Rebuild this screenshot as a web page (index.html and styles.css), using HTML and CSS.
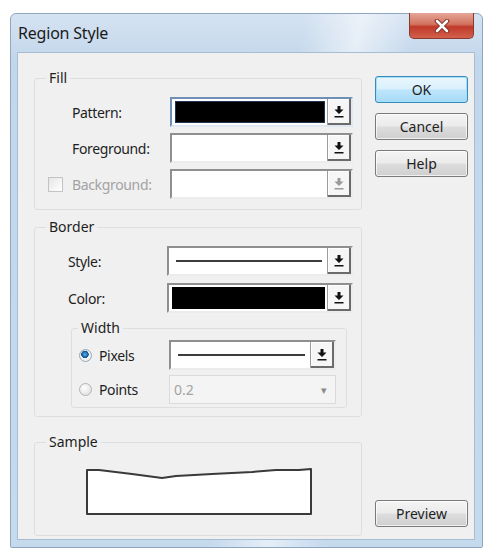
FILE: index.html
```html
<!DOCTYPE html>
<html lang="en">

<head>
  <meta charset="UTF-8">
  <meta name="viewport" content="width=device-width, initial-scale=1.0">
  <title>Region Style</title>
  <link rel="stylesheet" href="styles.css">
</head>

<body>
  <div class="window">
    <div class="titlebar">
      <span class="title">Region Style</span>
      <div class="close-btn">
        <svg width="16" height="14" viewBox="0 0 16 14">
          <path d="M3 2 L13 12 M13 2 L3 12" stroke="#7a2a20" stroke-width="4.5" stroke-linecap="round" />
          <path d="M3 2 L13 12 M13 2 L3 12" stroke="#ffffff" stroke-width="2.6" stroke-linecap="round" />
        </svg>
      </div>
    </div>

    <div class="client">
      <div class="groups">
        <fieldset class="group fill-group">
          <legend>Fill</legend>
          <div class="row fill-row">
            <span></span>
            <span class="lbl">Pattern:</span>
            <div class="combo focused">
              <div class="field"><div class="swatch"></div></div>
              <div class="drop"><svg class="drop-icon" width="10" height="12" viewBox="0 0 10 12"><path d="M3.5 0 H6.5 V3.5 H9.5 L5 8 L0.5 3.5 H3.5 Z M0.5 10 H9.5 V11.5 H0.5 Z" fill="#111" /></svg></div>
            </div>
          </div>
          <div class="row fill-row">
            <span></span>
            <span class="lbl">Foreground:</span>
            <div class="combo">
              <div class="field"></div>
              <div class="drop"><svg class="drop-icon" width="10" height="12" viewBox="0 0 10 12"><path d="M3.5 0 H6.5 V3.5 H9.5 L5 8 L0.5 3.5 H3.5 Z M0.5 10 H9.5 V11.5 H0.5 Z" fill="#111" /></svg></div>
            </div>
          </div>
          <div class="row fill-row">
            <span class="checkbox"></span>
            <span class="lbl disabled">Background:</span>
            <div class="combo">
              <div class="field"></div>
              <div class="drop"><svg class="drop-icon" width="10" height="12" viewBox="0 0 10 12"><path d="M3.5 0 H6.5 V3.5 H9.5 L5 8 L0.5 3.5 H3.5 Z M0.5 10 H9.5 V11.5 H0.5 Z" fill="#9a9a9a" /></svg></div>
            </div>
          </div>
        </fieldset>

        <fieldset class="group border-group">
          <legend>Border</legend>
          <div class="row border-row">
            <span class="lbl">Style:</span>
            <div class="combo">
              <div class="field"><div class="line"></div></div>
              <div class="drop"><svg class="drop-icon" width="10" height="12" viewBox="0 0 10 12"><path d="M3.5 0 H6.5 V3.5 H9.5 L5 8 L0.5 3.5 H3.5 Z M0.5 10 H9.5 V11.5 H0.5 Z" fill="#111" /></svg></div>
            </div>
          </div>
          <div class="row border-row">
            <span class="lbl">Color:</span>
            <div class="combo">
              <div class="field"><div class="swatch"></div></div>
              <div class="drop"><svg class="drop-icon" width="10" height="12" viewBox="0 0 10 12"><path d="M3.5 0 H6.5 V3.5 H9.5 L5 8 L0.5 3.5 H3.5 Z M0.5 10 H9.5 V11.5 H0.5 Z" fill="#111" /></svg></div>
            </div>
          </div>

          <fieldset class="group width-group">
            <legend>Width</legend>
            <div class="row width-row">
              <span class="radio checked"></span>
              <span class="lbl">Pixels</span>
              <div class="combo">
                <div class="field"><div class="line"></div></div>
                <div class="drop"><svg class="drop-icon" width="10" height="12" viewBox="0 0 10 12"><path d="M3.5 0 H6.5 V3.5 H9.5 L5 8 L0.5 3.5 H3.5 Z M0.5 10 H9.5 V11.5 H0.5 Z" fill="#111" /></svg></div>
              </div>
            </div>
            <div class="row width-row">
              <span class="radio"></span>
              <span class="lbl">Points</span>
              <div class="combo flat">
                <span class="value">0.2</span>
                <span class="arrow">&#9662;</span>
              </div>
            </div>
          </fieldset>
        </fieldset>

        <fieldset class="group sample-group">
          <legend>Sample</legend>
          <svg class="sample" width="230" height="50" viewBox="0 0 230 50">
            <path d="M2 3 L14 3 L47 7 L77 11 L91 9 L127 7 L167 5 L191 3 L214 3 L226 2 L226 47 L2 47 Z"
              fill="#ffffff" stroke="#3a3a3a" stroke-width="2" stroke-linejoin="round" />
          </svg>
        </fieldset>
      </div>

      <div class="side">
        <button class="dlg-button default">OK</button>
        <button class="dlg-button">Cancel</button>
        <button class="dlg-button">Help</button>
        <button class="dlg-button preview">Preview</button>
      </div>
    </div>
  </div>
</body>

</html>
```

FILE: styles.css
```css
body {
  margin: 0;
  padding: 13px 0 0 10px;
  background-color: #ffffff;
  font-family: 'Noto Sans', 'Open Sans', sans-serif;
  font-size: 14px;
  color: #1e1e1e;
}

.window {
  box-sizing: border-box;
  width: 473px;
  height: 535px;
  border: 1px solid #8ea6bf;
  border-radius: 6px 6px 2px 2px;
  padding: 0 7px 7px 6px;
  background:
    linear-gradient(100deg, rgba(255, 255, 255, 0) 52%, rgba(255, 255, 255, 0.55) 62%, rgba(255, 255, 255, 0) 72%),
    linear-gradient(to bottom, #d5e3f1 0, #c3d7ec 45px, #c6daee 100%);
}

.titlebar {
  display: flex;
  justify-content: space-between;
  align-items: center;
  height: 38px;
}

.title {
  padding-left: 1px;
  font-size: 16px;
  color: #1a1a1a;
  padding-bottom: 1px;
  letter-spacing: -0.2px;
}

.close-btn {
  align-self: flex-start;
  margin-top: -1px;
  margin-right: 1px;
  width: 65px;
  height: 26px;
  box-sizing: border-box;
  display: flex;
  align-items: center;
  justify-content: center;
  border: 1px solid #8b3a30;
  border-top: none;
  border-radius: 0 0 5px 5px;
  background: linear-gradient(to bottom, #e6a597 0, #d2735f 45%, #c0392a 55%, #d3604c 100%);
}

.client {
  box-sizing: border-box;
  display: flex;
  justify-content: space-between;
  height: 488px;
  padding: 0 6px 0 16px;
  border: 1px solid #a8bdd2;
  background-color: #f0f0f0;
}

.groups {
  width: 328px;
}

/* group boxes */

.group {
  margin: 0;
  padding: 0;
  border: 1px solid #dcdfe2;
  border-radius: 3px;
  min-width: 0;
}

.group legend {
  margin-left: 11px;
  padding: 0 3px;
  line-height: 16px;
}

.fill-group {
  margin-top: 17px;
  padding: 11px 0 10px;
}

.border-group {
  margin-top: 9px;
  padding: 11px 0 8px;
}

.width-group {
  margin: 5px 0 0 36px;
  width: 276px;
  box-sizing: border-box;
  padding: 4px 0 3px;
}

.width-group legend {
  margin-left: 6px;
}

.sample-group {
  margin-top: 17px;
  padding: 17px 0 18px;
}

.sample {
  display: block;
  margin-left: 50px;
}

/* rows */

.row {
  display: grid;
  align-items: center;
  height: 30px;
}

.fill-row {
  grid-template-columns: 24px 98px 183px;
  padding-left: 13px;
  margin-bottom: 6px;
}

.fill-row:last-child {
  margin-bottom: 0;
}

.border-row {
  grid-template-columns: 99px 186px;
  padding-left: 33px;
  margin-bottom: 7px;
}

.width-row {
  grid-template-columns: 20px 70px 167px;
  padding-left: 7px;
  margin-bottom: 5px;
}

.width-row:last-child {
  margin-bottom: 0;
  height: 29px;
}

.lbl {
  white-space: nowrap;
  letter-spacing: -0.35px;
}

.lbl.disabled {
  color: #a3a3a3;
}

/* combo boxes */

.combo {
  box-sizing: border-box;
  display: flex;
  height: 100%;
  border: 2px solid;
  border-color: #8f8f8f #ececec #ececec #8f8f8f;
  background-color: #ffffff;
}

.combo.focused {
  border-color: #6f8fb4 #dfe8f2 #dfe8f2 #6f8fb4;
}

.field {
  flex: 1;
  display: flex;
  align-items: center;
  padding: 2px 2px 2px 3px;
}

.swatch {
  width: 100%;
  height: 100%;
  background-color: #000000;
}

.combo.focused .swatch {
  box-shadow: inset 0 0 0 1px #1d3552;
}

.line {
  width: 100%;
  margin: 0 3px 0 4px;
  height: 2px;
  background-color: #3c3c3c;
}

.drop {
  box-sizing: border-box;
  width: 24px;
  display: flex;
  align-items: center;
  justify-content: center;
  border-left: 1px solid #9c9c9c;
  background-color: #f6f6f6;
  box-shadow: inset -2px -2px 0 #6b6b6b, inset 1px 1px 0 #ffffff;
}

.drop-icon {
  margin: -1px 1px 0 0;
}

.combo.flat {
  border: 1px solid #dadada;
  background-color: #f4f4f4;
  align-items: center;
  justify-content: space-between;
  padding: 0 8px 0 4px;
}

.value {
  color: #a4a4a4;
}

.arrow {
  color: #8a8a8a;
  font-size: 11px;
}

/* check and radio */

.checkbox {
  width: 13px;
  height: 13px;
  border: 1px solid #c3c3c3;
  background: linear-gradient(135deg, #e6e6e6, #ffffff);
}

.radio {
  box-sizing: border-box;
  width: 13px;
  height: 13px;
  border-radius: 50%;
  border: 1px solid #b4b4b4;
  background: radial-gradient(circle at 40% 35%, #ffffff 0, #d9d9d9 100%);
}

.radio.checked {
  border-color: #9aa7b3;
  background:
    radial-gradient(circle at 45% 40%, #5fb2e6 0, #1f6fae 2.5px, #0d4f86 3.5px, rgba(0, 0, 0, 0) 4px),
    radial-gradient(circle, #ffffff 0, #dfe6ec 100%);
}

/* buttons */

.side {
  display: flex;
  flex-direction: column;
  gap: 10px;
  width: 93px;
  padding: 23px 0 12px;
}

.dlg-button {
  height: 27px;
  padding: 0;
  border: 1px solid #7a7a7a;
  border-radius: 3px;
  font-family: 'Noto Sans', 'Open Sans', sans-serif;
  font-size: 14px;
  color: #1e1e1e;
  background: linear-gradient(to bottom, #f4f4f4 0, #ebebeb 48%, #dddddd 52%, #cfcfcf 100%);
  box-shadow: inset 0 0 0 1px rgba(255, 255, 255, 0.7);
}

.dlg-button.default {
  border-color: #3c89c0;
  background: linear-gradient(to bottom, #eaf6fd 0, #d9f0fc 48%, #bee6fd 52%, #a7d9f5 100%);
  box-shadow: inset 0 0 0 1px #9fe1f7;
}

.dlg-button.preview {
  margin-top: auto;
}
```
